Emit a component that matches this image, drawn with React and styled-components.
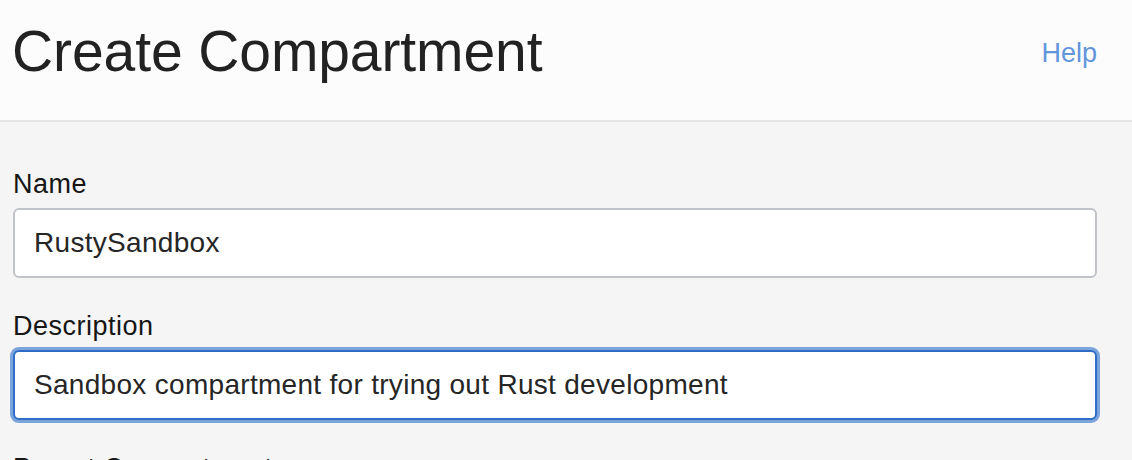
import React from 'react'
import styled, { createGlobalStyle, css } from 'styled-components'

const Global = createGlobalStyle`
  html, body {
    margin: 0;
    padding: 0;
    background: #f5f5f5;
    font-family: "Liberation Sans", Arial, sans-serif;
  }
  * { box-sizing: border-box; }
`

const Page = styled.div`
  width: 1132px;
  height: 460px;
  overflow: hidden;
  background: #f5f5f5;
`

const Header = styled.header`
  display: flex;
  align-items: center;
  justify-content: space-between;
  height: 122px;
  padding: 0 35px 17px 12px;
  background: #fcfcfc;
  border-bottom: 2px solid #e6e6e6;
`

const Title = styled.h1`
  margin: 0;
  font-size: 57px;
  line-height: 1;
  font-weight: 400;
  letter-spacing: -0.1px;
  color: #222;
`

const HelpLink = styled.a`
  margin-top: 3px;
  font-size: 27px;
  line-height: 1;
  font-weight: 300;
  color: #6295dc;
  text-decoration: none;
  cursor: pointer;
`

const Form = styled.form`
  padding: 47px 35px 0 13px;
`

const Field = styled.div`
  margin-bottom: 33px;
`

const Label = styled.label`
  display: block;
  margin-bottom: 9px;
  font-size: 27px;
  line-height: 30px;
  letter-spacing: 0.5px;
  color: #161616;
`

const focusRing = css`
  border-color: #2f6dc9;
  box-shadow: 0 0 0 3px #7ba3dc;
`

const TextInput = styled.input`
  display: block;
  width: 100%;
  height: 70px;
  padding: 0 19px;
  border: 2px solid #c0c3c8;
  border-radius: 6px;
  background: #fff;
  font-family: "Liberation Sans", Arial, sans-serif;
  font-size: 28px;
  letter-spacing: 0.3px;
  color: #262626;
  outline: none;
  ${props => props.$focused && focusRing}
`

export default function App() {
  return (
    <Page>
      <Global />
      <Header>
        <Title>Create Compartment</Title>
        <HelpLink>Help</HelpLink>
      </Header>
      <Form onSubmit={e => e.preventDefault()}>
        <Field>
          <Label htmlFor="name">Name</Label>
          <TextInput id="name" defaultValue="RustySandbox" readOnly />
        </Field>
        <Field>
          <Label htmlFor="description">Description</Label>
          <TextInput
            id="description"
            defaultValue="Sandbox compartment for trying out Rust development"
            readOnly
            $focused
          />
        </Field>
        <Field>
          <Label>Parent Compartment</Label>
        </Field>
      </Form>
    </Page>
  )
}
